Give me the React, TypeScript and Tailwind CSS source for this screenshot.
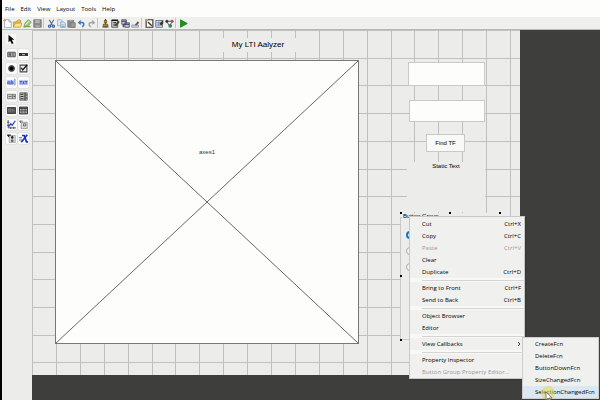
import React from "react";

const Svg = ({ children, size = 9 }: { children: React.ReactNode; size?: number }) => (
  <svg width={size} height={size} viewBox="0 0 12 12" fill="none" aria-hidden="true">{children}</svg>
);

const toolGroups: { label: string; icon: React.ReactNode }[][] = [
  [
    { label: "New", icon: <><path d="M2 1h6l3 3v7.500H2z" fill="#fff" stroke="#7f9cc0" /><path d="M8 1v3h3" stroke="#7f9cc0" /><path d="M0 2h4M2 0v4" stroke="#f0a23c" strokeWidth="1.500" /></> },
    { label: "Open", icon: <><path d="M.5 11V4H4l1-1.500h5V5" fill="#eebf45" stroke="#c49124" /><path d="M.5 11L3 5.500h9L10 11z" fill="#fbe28c" stroke="#c49124" /><path d="M6 2c2-2 4-1 5 1" stroke="#c49124" /></> },
    { label: "Edit", icon: <><path d="M1 11l2-6 4-4 4 3-4 5z" fill="#a6ce82" stroke="#6b9b50" /><path d="M2 9h8v2H1z" fill="#75a957" /><path d="M3 8l5-5" stroke="#fff" /></> },
    { label: "Save", icon: <><path d="M1 1h10v10H1z" fill="#8b8b8b" stroke="#717171" /><path d="M3 1.500h6v4H3z" fill="#b5b5b5" /><path d="M3 8h6v3H3z" fill="#a7a7a7" /></> },
  ],
  [
    { label: "Cut", icon: <><path d="M3 1l4 7M9 1L5 8" stroke="#596d91" strokeWidth="1.500" /><circle cx="3.500" cy="9.500" r="1.500" stroke="#274f96" strokeWidth="1.500" /><circle cx="8.500" cy="9.500" r="1.500" stroke="#274f96" strokeWidth="1.500" /></> },
    { label: "Copy", icon: <><path d="M.5 1h5l2 2v6h-7z" fill="#dce9f5" stroke="#8ba8c7" /><path d="M5 4h4l2 2v5.500H5z" fill="#dce9f5" stroke="#7899bd" /><path d="M6 8h4M6 10h4" stroke="#7899bd" /></> },
    { label: "Paste", icon: <><path d="M1 2h8v9H1z" fill="#8b8b8b" stroke="#777" /><path d="M3 1h4v2H3z" fill="#aaa" /><path d="M5 5h6v6.500H5z" fill="#999" stroke="#777" /></> },
    { label: "Undo", icon: <><path d="M4 4.500h2c4 0 4 4 1 6" stroke="#3974c9" strokeWidth="2" /><path d="M1 5l4-4v7z" fill="#3974c9" /></> },
    { label: "Redo", icon: <><path d="M8 4.500H6c-4 0-4 4-1 6" stroke="#a3a3a3" strokeWidth="2" /><path d="M11 5L7 1v7z" fill="#a3a3a3" /></> },
  ],
  [
    { label: "Align Objects", icon: <><path d="M6 0v11M2 10.500h8" stroke="#3f3828" strokeWidth="1.500" /><path d="M4.500 2h3v3h-3zM3 7h6v2.500H3z" fill="#d5a926" stroke="#51431b" /></> },
    { label: "Menu Editor", icon: <><path d="M1 1h8v10H1z" fill="#d5d5d5" stroke="#333" /><path d="M1 2h8M3 5h4M3 8h5" stroke="#111" strokeWidth="1.500" /><path d="M5 8l5-6 1.500 2L7 10z" fill="#554329" /></> },
    { label: "Tab Order Editor", icon: <><path d="M1 1h6v6H1zM5 5h6v6H5z" fill="#c5c8e4" stroke="#393950" /><path d="M1 3h6M5 7h6M3 7v4" stroke="#34344f" strokeWidth="1.500" /></> },
    { label: "Toolbar Editor", icon: <><path d="M1 8h9v3H1z" fill="#ccd8e0" stroke="#8294a1" /><path d="M5 8l4-5 2 2-4 4z" fill="#695742" /></> },
  ],
  [
    { label: "M-file Editor", icon: <><path d="M1.500 1h9v10h-9z" fill="#fff" stroke="#333" strokeWidth="1.500" /><path d="M0 0h4v3H0z" fill="#db914e" /><path d="M4 4l5 5" stroke="#513e23" strokeWidth="2" /></> },
    { label: "Property Inspector", icon: <><path d="M1 2h9v9H1z" fill="#dbe6f8" stroke="#49556d" /><path d="M2 5h7M2 8h7M5 3v7" stroke="#657ca8" /><path d="M6 6l5-5v5l-3 3z" fill="#493622" /></> },
    { label: "Object Browser", icon: <><path d="M2 3l4 6 4-6z" stroke="#333" /><circle cx="2.500" cy="3" r="2" fill="#34353a" /><circle cx="9.500" cy="3" r="2" fill="#b6475c" /><circle cx="7" cy="9" r="2.500" fill="#308569" /></> },
  ],
  [{ label: "Run", icon: <path d="M2 1l9 5-9 5z" fill="#16991a" stroke="#087c0b" /> }],
];

const paletteItems: { label: string; icon: React.ReactNode }[] = [
  { label: "Push Button", icon: <><path d="M1 3h10v6H1z" fill="#b5b5b5" stroke="#555" strokeWidth="1.300" /><path d="M3 5h2v2H3zM8 4v4" stroke="#333" /></> },
  { label: "Slider", icon: <><path d="M0 4h12v4H0z" fill="#333" /><path d="M4 5.500h4v1.500H4z" fill="#bbb" /></> },
  { label: "Radio Button", icon: <><circle cx="6" cy="6" r="4" fill="#777" stroke="#333" /><circle cx="6" cy="6" r="3" fill="#050505" /></> },
  { label: "Check Box", icon: <><path d="M1.500 1.500h9v9h-9z" fill="#eee" stroke="#444" strokeWidth="1.500" /><path d="M3 5l2 3 6-7" stroke="#111" strokeWidth="1.800" /></> },
  { label: "Edit Text", icon: <><path d="M0 3h9v6H0z" fill="#aebcf2" /><path d="M1 8V5h3v4M1 7h3M6 3v5h2V5H6M10.500 1v9" stroke="#3f56bd" /></> },
  { label: "Static Text", icon: <><path d="M0 3h12v6H0z" fill="#b3bff5" /><path d="M1 4.500h3M2.500 4v4.500M5 4l2 4.500M7 4L5 8.500M8 4.500h3M9.500 4v4.500" stroke="#2f48c7" /></> },
  { label: "Pop-up Menu", icon: <><path d="M.5 3h11v6H.5z" fill="#ccc" stroke="#666" /><path d="M2 6h4M7 3v6" stroke="#555" /><path d="M8 5h3L9.500 7z" fill="#222" /></> },
  { label: "Listbox", icon: <><path d="M1 1h10v10H1z" fill="#bbb" stroke="#555" /><path d="M2 3h4M2 6h4M2 9h4M8 1v10" stroke="#333" strokeWidth="1.500" /><path d="M9 4h2M9 8h2" stroke="#222" /></> },
  { label: "Toggle Button", icon: <><path d="M.5 2h11v8H.5z" fill="#555" stroke="#222" /><path d="M2 4h3v3H2zM7 4v4M8 6h2" stroke="#888" /></> },
  { label: "Table", icon: <><path d="M.5 1.500h11v9H.5z" fill="#aaa" stroke="#222" strokeWidth="1.300" /><path d="M0 3h12" stroke="#333" strokeWidth="1.500" /><path d="M4 3v7M8 3v7M1 6.500h10" stroke="#444" /></> },
  { label: "Axes", icon: <><path d="M1.500 0v10.500H12M0 3h3M0 7h3M5 9v3M9 9v3" stroke="#333" /><path d="M2 9l3-4 2 2 4-6" stroke="#2945c6" strokeWidth="1.700" /></> },
  { label: "Panel", icon: <><path d="M3 3h8v8.500H3z" fill="#ddd" stroke="#888" /><path d="M0 1.500h5M2 1v3M6 5h3v3H6z" stroke="#555" /></> },
  { label: "Button Group", icon: <><path d="M3 2h8v9.500H3z" fill="#ddd" stroke="#999" /><path d="M0 1.500h5M2 1v3" stroke="#222" strokeWidth="1.500" /><circle cx="7" cy="4.500" r="1.700" fill="#222" /><circle cx="7" cy="9" r="1.700" fill="#555" /></> },
  { label: "ActiveX Control", icon: <><path d="M4 2h3l3 8.500h2M11 1L3 11" stroke="#1532c9" strokeWidth="2.200" /><path d="M0 5h4M0 8h4" stroke="#444" /></> },
];

type Entry = { label: string; keys?: string; disabled?: boolean; arrow?: boolean };
const contextGroups: Entry[][] = [
  [
    { label: "Cut", keys: "Ctrl+X" },
    { label: "Copy", keys: "Ctrl+C" },
    { label: "Paste", keys: "Ctrl+V", disabled: true },
    { label: "Clear" },
    { label: "Duplicate", keys: "Ctrl+D" },
  ],
  [{ label: "Bring to Front", keys: "Ctrl+F" }, { label: "Send to Back", keys: "Ctrl+B" }],
  [{ label: "Object Browser" }, { label: "Editor" }],
  [{ label: "View Callbacks", arrow: true }],
  [{ label: "Property Inspector" }, { label: "Button Group Property Editor...", disabled: true }],
];
const callbacks = ["CreateFcn", "DeleteFcn", "ButtonDownFcn", "SizeChangedFcn", "SelectionChangedFcn"];

function GridLines() {
  return (
    <svg className="absolute inset-0 h-full w-full" aria-hidden="true" stroke="#c0c0bd" strokeWidth="1">
      {Array.from({ length: 21 }, (_, i) => {
        const x = Math.round(i * 23.9) + 0.5;
        return <line key={x} x1={x} x2={x} y1="0" y2="100%" />;
      })}
      {Array.from({ length: 13 }, (_, i) => {
        const y = Math.round(i * 27.7) + 0.5;
        return <line key={y} x1="0" x2="100%" y1={y} y2={y} />;
      })}
    </svg>
  );
}

function DesignCanvas() {
  return (
    <section aria-label="Layout area" className="relative h-[345px] w-[488px] bg-[#ececeb] font-['Liberation_Sans',sans-serif]">
      <GridLines />
      <h1 className="absolute top-2 left-[170px] h-[14px] w-28 bg-[#ececeb] text-center text-[8px] leading-[14px] text-black">My LTI Aalyzer</h1>
      <div className="absolute top-[30px] left-[23px] h-[284px] w-[304px] border border-[#777] bg-[#fdfdfc]">
        <svg className="absolute inset-0 h-full w-full" viewBox="0 0 302 282" preserveAspectRatio="none" aria-hidden="true">
          <path d="M0 0L302 282M302 0L0 282" stroke="#666" strokeWidth="1" />
        </svg>
        <span className="absolute top-[86px] left-[143px] leading-[10px] text-[#333]">axes1</span>
      </div>
      <input aria-label="Numerator" className="absolute top-8 left-[376px] h-6 w-[77px] border border-[#c9c9c7] bg-[#fdfdfc]" />
      <input aria-label="Denominator" className="absolute top-[70px] left-[377px] h-[22px] w-[76px] border border-[#c9c9c7] bg-[#fdfdfc]" />
      <button className="absolute top-[104px] left-[394px] h-[18px] w-[39px] border border-[#c9c9c7] bg-[#f9f9f8] text-black">Find TF</button>
      <div className="absolute top-[132px] left-[375px] h-[50px] w-[78px] bg-[#ececeb] text-center leading-[9px] text-black">Static Text</div>
      <fieldset className="absolute top-[183px] left-[368px] h-[127px] w-[100px] bg-[#ececeb]">
        <div className="absolute inset-x-0 top-1 bottom-0 border border-[#c9c9c7]" />
        <legend className="absolute top-0 left-0.5 bg-[#ececeb] px-px leading-[6px] text-black">Button Group</legend>
        <div className="flex flex-col gap-2 pt-[18px] pl-1.5">
          {["First option", "Second option", "Third option"].map((name, i) => (
            <input key={name} type="radio" name="group" aria-label={name} defaultChecked={i === 0} className="size-2 appearance-none rounded-full border border-[#aaa] bg-[#f5f5f4] checked:border-2 checked:border-[#1675bd]" />
          ))}
        </div>
        {["-top-px left-0", "-top-px left-[49px]", "-top-px left-[99px]", "top-[62px] left-0", "-bottom-px left-0"].map((place) => (
          <i key={place} className={`absolute size-0.5 bg-black ${place}`} />
        ))}
      </fieldset>
    </section>
  );
}

function ContextMenu() {
  return (
    <div role="menu" aria-label="Component actions" className="absolute top-[216px] left-[407px] flex w-[116px] flex-col border border-[#c8c8c6] bg-[#f0f0ef] pt-px shadow-[1px_1px_1px_#2224]">
      {contextGroups.map((group, g) => (
        <div key={group[0].label} role="group">
          {g > 0 && <div role="separator" className="flex h-1 items-center bg-[#f8f8f7] pl-3"><hr className="w-full border-[#d4d4d2]" /></div>}
          {group.map((item) => (
            <button key={item.label} role="menuitem" disabled={item.disabled} className="flex h-3 w-full items-center justify-between pr-[3px] pl-3 whitespace-nowrap text-black disabled:text-[#999]">
              <span>{item.label}</span>
              {item.arrow ? (
                <svg width="3" height="6" viewBox="0 0 3 6" fill="none" stroke="#333" aria-hidden="true"><path d="M0 1l2 2-2 2" /></svg>
              ) : <span>{item.keys}</span>}
            </button>
          ))}
        </div>
      ))}
    </div>
  );
}

function CallbackMenu() {
  return (
    <div role="menu" aria-label="View Callbacks" className="absolute top-[337px] left-[520px] flex w-[77px] flex-col border border-[#ccc] bg-[#f0f0ef]">
      {callbacks.map((name) => (
        <button key={name} role="menuitem" className="h-3 w-full pl-3 text-left whitespace-nowrap text-black last:bg-[#d9e8f2]">{name}</button>
      ))}
    </div>
  );
}

export default function App() {
  return (
    <main className="relative flex h-screen flex-col overflow-hidden border-l-2 border-black bg-[#ececeb] font-['Open_Sans','Noto_Sans',sans-serif] text-[6px]">
      <nav aria-label="Main menu" className="flex h-[17px] shrink-0 items-center gap-[6px] bg-[#fdfdfc] pt-px pl-[3px] text-black">
        {["File", "Edit", "View", "Layout", "Tools", "Help"].map((name) => <button key={name}>{name}</button>)}
      </nav>
      <div role="toolbar" className="flex h-3 shrink-0 items-center bg-[#efefee]">
        {toolGroups.map((group, g) => (
          <div key={g} className={`flex items-center ${g ? "ml-px border-l border-[#c5c5c3] pl-0.5" : ""}`}>
            {group.map((tool) => <button key={tool.label} aria-label={tool.label} className="flex size-[10px] items-center justify-center"><Svg>{tool.icon}</Svg></button>)}
          </div>
        ))}
      </div>
      <div className="flex min-h-0 flex-1 border-t border-[#b9b9b7]">
        <aside aria-label="Component palette" className="w-[30px] shrink-0 pt-1 pl-1">
          <button aria-label="Select" className="flex size-[10px] items-center justify-center bg-[#f6f6f5]">
            <Svg size={10}><path d="M3 1v9l2-2 2 4 2-1-2-4h3z" fill="#080808" /></Svg>
          </button>
          <div className="mt-[5px] grid w-[23px] grid-cols-2 gap-x-px gap-y-[3px]">
            {paletteItems.map((item) => (
              <button key={item.label} aria-label={item.label} className="flex h-[11px] items-center justify-center rounded-[1px] bg-[#fafafa] shadow-[0_0_1px_#999]"><Svg>{item.icon}</Svg></button>
            ))}
          </div>
        </aside>
        <div className="min-w-0 flex-1 bg-[#3e3e3c]"><DesignCanvas /></div>
      </div>
      <ContextMenu />
      <CallbackMenu />
      <svg className="pointer-events-none absolute top-[386px] left-[538px]" width="16" height="16" viewBox="0 0 16 16" aria-hidden="true">
        <circle cx="8" cy="7" r="7" fill="#e5d83c" fillOpacity=".5" />
        <path d="M6 6v8l2-2 2 4 1-1-2-3h3z" fill="#fff" stroke="#555" strokeWidth=".7" />
      </svg>
    </main>
  );
}
